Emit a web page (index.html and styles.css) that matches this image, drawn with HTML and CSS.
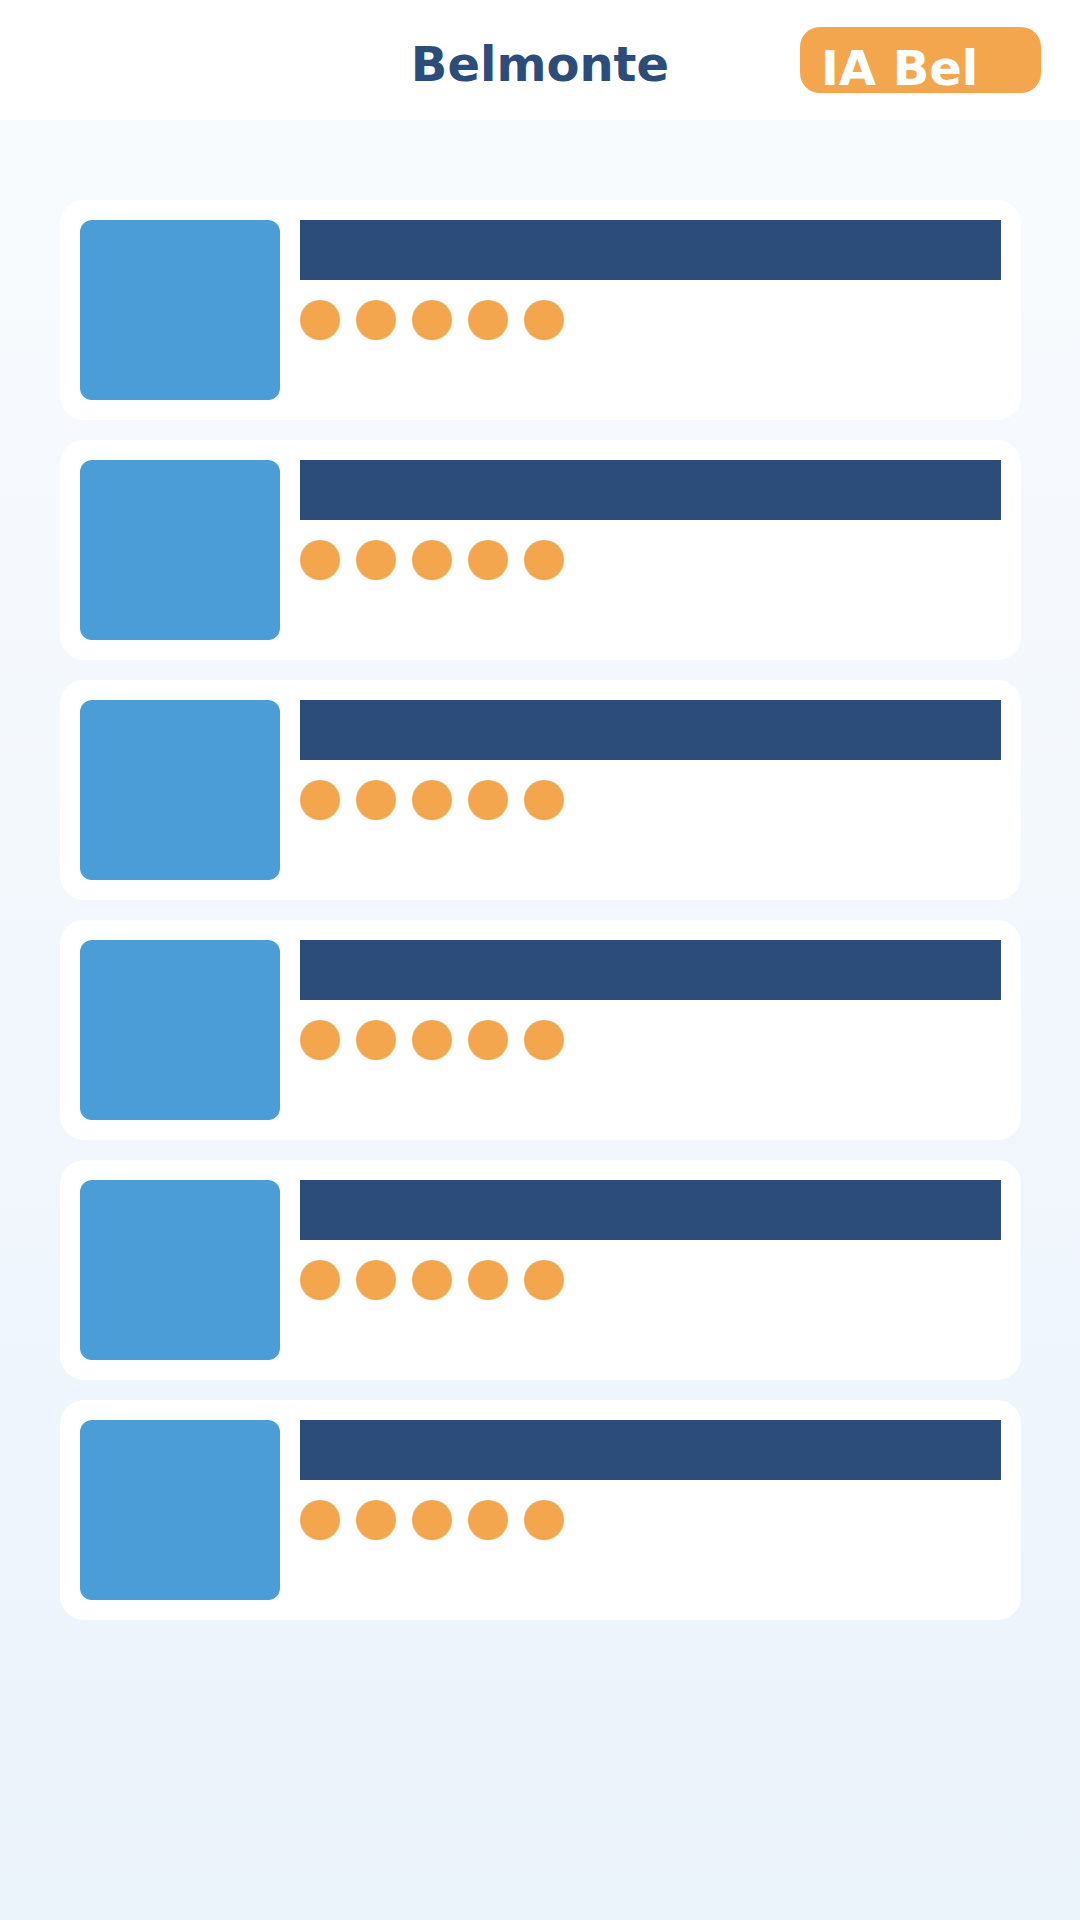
FILE: index.html
```html
<!DOCTYPE html>
<html lang="en">
<head>
    <meta charset="UTF-8">
    <meta name="viewport" content="width=device-width, initial-scale=1.0">
    <title>Belmonte</title>
    <link rel="stylesheet" href="styles.css">
</head>
<body>

    <header class="top-bar">
        <div></div>
        <h1 class="brand">Belmonte</h1>
        <div class="badge-wrap">
            <div class="badge">IA Bel</div>
        </div>
    </header>

    <main class="list">
        <div class="card">
            <div class="thumb"></div>
            <div class="info">
                <div class="title-bar"></div>
                <div class="dots">
                    <span class="dot"></span><span class="dot"></span><span class="dot"></span><span class="dot"></span><span class="dot"></span>
                </div>
            </div>
        </div>
        <div class="card">
            <div class="thumb"></div>
            <div class="info">
                <div class="title-bar"></div>
                <div class="dots">
                    <span class="dot"></span><span class="dot"></span><span class="dot"></span><span class="dot"></span><span class="dot"></span>
                </div>
            </div>
        </div>
        <div class="card">
            <div class="thumb"></div>
            <div class="info">
                <div class="title-bar"></div>
                <div class="dots">
                    <span class="dot"></span><span class="dot"></span><span class="dot"></span><span class="dot"></span><span class="dot"></span>
                </div>
            </div>
        </div>
        <div class="card">
            <div class="thumb"></div>
            <div class="info">
                <div class="title-bar"></div>
                <div class="dots">
                    <span class="dot"></span><span class="dot"></span><span class="dot"></span><span class="dot"></span><span class="dot"></span>
                </div>
            </div>
        </div>
        <div class="card">
            <div class="thumb"></div>
            <div class="info">
                <div class="title-bar"></div>
                <div class="dots">
                    <span class="dot"></span><span class="dot"></span><span class="dot"></span><span class="dot"></span><span class="dot"></span>
                </div>
            </div>
        </div>
        <div class="card">
            <div class="thumb"></div>
            <div class="info">
                <div class="title-bar"></div>
                <div class="dots">
                    <span class="dot"></span><span class="dot"></span><span class="dot"></span><span class="dot"></span><span class="dot"></span>
                </div>
            </div>
        </div>
    </main>

</body>
</html>
```

FILE: styles.css
```css
html {
    min-height: 100%;
}

body {
    font-family: "DejaVu Sans", sans-serif;
    margin: 0;
    padding: 0;
    min-height: 1920px;
    background: linear-gradient(to bottom, #f8fbfe 120px, #ebf3fb 100%);
}

.top-bar {
    display: grid;
    grid-template-columns: 1fr auto 1fr;
    align-items: start;
    height: 120px;
    background-color: #fff;
}

.brand {
    margin: 36px 0 0;
    font-size: 48px;
    line-height: 56px;
    font-weight: bold;
    color: #2c4d7a;
}

.badge-wrap {
    display: flex;
    justify-content: flex-end;
    padding-right: 39px;
}

.badge {
    box-sizing: border-box;
    width: 241px;
    height: 66px;
    margin-top: 27px;
    padding: 16px 0 0 21px;
    background-color: #f3a64e;
    border-radius: 20px;
    color: #fff;
    font-size: 48px;
    font-weight: bold;
    line-height: 50px;
    white-space: nowrap;
}

.list {
    display: flex;
    flex-direction: column;
    gap: 20px;
    padding: 80px 59px 0 60px;
}

.card {
    display: flex;
    gap: 20px;
    height: 220px;
    box-sizing: border-box;
    padding: 20px;
    background-color: #fff;
    border-radius: 24px;
}

.thumb {
    width: 200px;
    height: 180px;
    flex-shrink: 0;
    background-color: #4a9dd6;
    border-radius: 12px;
}

.info {
    flex: 1;
    display: flex;
    flex-direction: column;
    gap: 20px;
}

.title-bar {
    height: 60px;
    background-color: #2c4d7a;
}

.dots {
    display: flex;
    gap: 16px;
}

.dot {
    width: 40px;
    height: 40px;
    border-radius: 50%;
    background-color: #f3a64e;
}
```
